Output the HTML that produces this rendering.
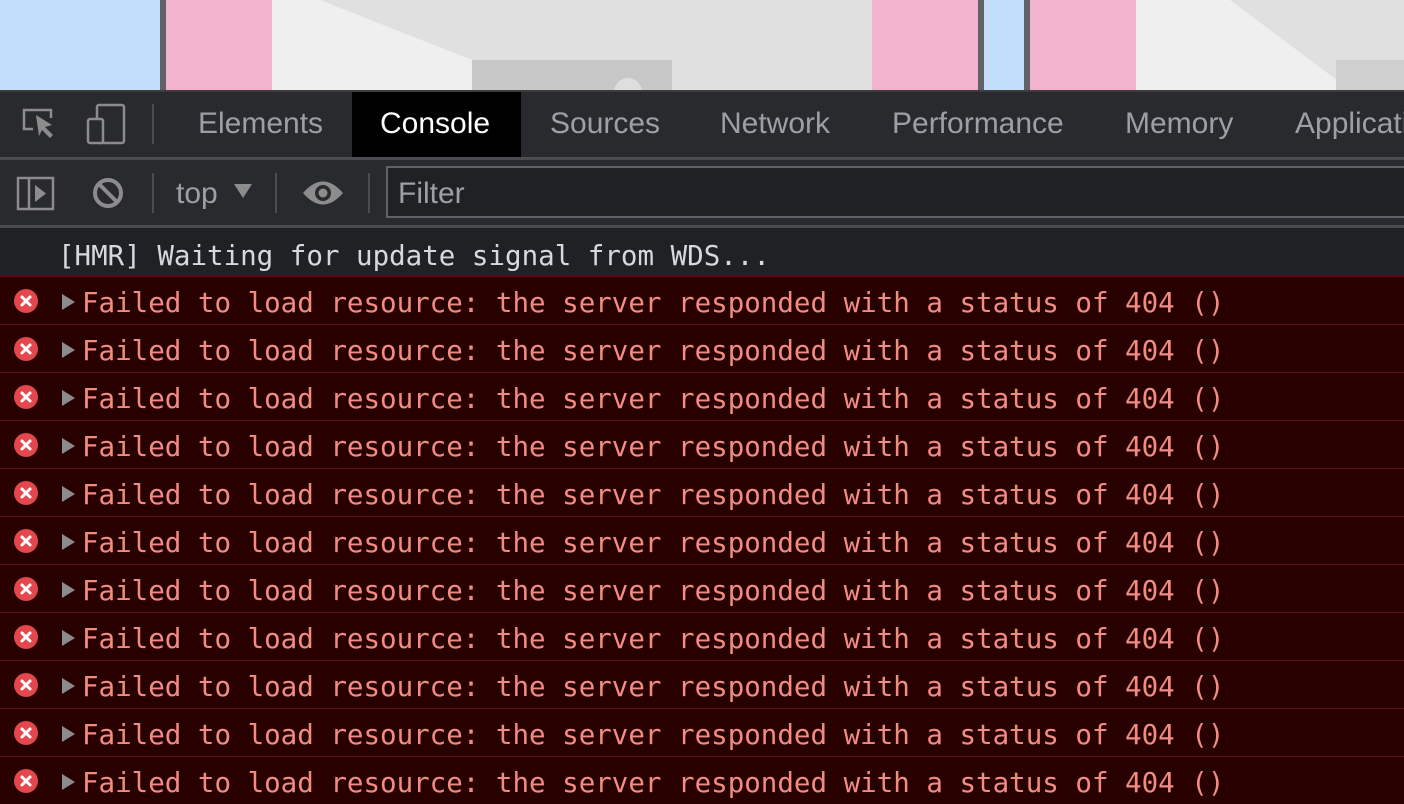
<!DOCTYPE html>
<html><head><meta charset="utf-8"><style>
*{margin:0;padding:0;box-sizing:border-box}
body{width:1404px;height:802px;overflow:hidden;background:#202124;position:relative;font-family:"Liberation Sans",Helvetica,Arial,sans-serif}
.abs{position:absolute}
.tab{position:absolute;top:92px;height:66px;line-height:64px;font-size:30px;color:#9aa0a6;letter-spacing:0}
.row{position:absolute;left:0;width:1404px;height:48px;background:#290000;border-top:1px solid #5c0a0a}
.row .txt{position:absolute;left:82px;top:10px;font-family:"DejaVu Sans Mono","Liberation Mono",monospace;font-size:27.5px;color:#f28b82;white-space:pre;line-height:32px}
.row .ic{position:absolute;left:14px;top:12px;width:24px;height:24px;border-radius:50%;background:#e3474b}
.row .tri{position:absolute;left:62px;top:17px;width:0;height:0;border-left:13px solid #8c8c8c;border-top:8px solid transparent;border-bottom:8px solid transparent}
</style></head><body>
<svg class="abs" style="left:0;top:0" width="1404" height="92">
<rect x="0" y="0" width="1404" height="92" fill="#5f6368"/>
<rect x="0" y="0" width="160" height="90" fill="#c2defb"/>
<rect x="166" y="0" width="106" height="90" fill="#f2b3ce"/>
<rect x="272" y="0" width="600" height="90" fill="#efefef"/>
<polygon points="272,0 872,0 872,90 560,90 300,0" fill="#e0e0e0"/>
<polygon points="272,0 320,0 472,60 472,90 272,90" fill="#efefef"/>
<rect x="472" y="60" width="200" height="30" fill="#c8c8c8"/>
<circle cx="628" cy="92" r="14" fill="#dedede"/>
<rect x="872" y="0" width="106" height="90" fill="#f2b3ce"/>
<rect x="984" y="0" width="40" height="90" fill="#c2defb"/>
<rect x="1030" y="0" width="106" height="90" fill="#f2b3ce"/>
<rect x="1136" y="0" width="268" height="90" fill="#efefef"/>
<polygon points="1136,0 1404,0 1404,90 1350,90 1230,0" fill="#e0e0e0"/>
<polygon points="1336,60 1404,60 1404,90 1336,90" fill="#cfcfcf"/>
</svg>
<div class="abs" style="left:0;top:90px;width:1404px;height:68px;background:#292a2d;border-top:2px solid #3c3c3c"></div>
<div class="abs" style="left:0;top:157px;width:1404px;height:3px;background:#4a4c50"></div>
<div class="abs" style="left:352px;top:92px;width:169px;height:65px;background:#000"></div>
<svg class="abs" style="left:0;top:92px" width="160" height="66">
<path d="M33 37 H24 V18 H51 V26" fill="none" stroke="#8c8c8c" stroke-width="2.5"/>
<path d="M36 23 L52 33 L45 35 L53 43 L50 46 L42 38 L39 44 Z" fill="#8c8c8c"/>
<rect x="97" y="13" width="27" height="38" rx="2" fill="none" stroke="#8c8c8c" stroke-width="2.5"/>
<rect x="88" y="27" width="15" height="24" rx="2" fill="#292a2d" stroke="#8c8c8c" stroke-width="2.5"/>
<rect x="152" y="12" width="2" height="40" fill="#4a4c50"/>
</svg>
<div class="tab" style="left:198px">Elements</div>
<div class="tab" style="left:380px;color:#fff">Console</div>
<div class="tab" style="left:550px">Sources</div>
<div class="tab" style="left:720px">Network</div>
<div class="tab" style="left:892px">Performance</div>
<div class="tab" style="left:1125px">Memory</div>
<div class="tab" style="left:1295px">Application</div>
<div class="abs" style="left:0;top:160px;width:1404px;height:66px;background:#292a2d"></div>
<div class="abs" style="left:0;top:225px;width:1404px;height:3px;background:#4a4c50"></div>
<svg class="abs" style="left:0;top:160px" width="390" height="66">
<rect x="18" y="18" width="35" height="31" fill="none" stroke="#8c8c8c" stroke-width="2.5"/>
<line x1="29" y1="18" x2="29" y2="49" stroke="#8c8c8c" stroke-width="2.5"/>
<path d="M35 25 L46 33.5 L35 42 Z" fill="#8c8c8c"/>
<circle cx="108" cy="33" r="13" fill="none" stroke="#8c8c8c" stroke-width="4"/>
<line x1="99" y1="24" x2="117" y2="42" stroke="#8c8c8c" stroke-width="4"/>
<rect x="152" y="13" width="2" height="40" fill="#4a4c50"/>
<path d="M234 24 L252 24 L243 38 Z" fill="#8c8c8c"/>
<rect x="275" y="13" width="2" height="40" fill="#4a4c50"/>
<path d="M303 33 Q323 10 343 33 Q323 56 303 33 Z" fill="#8c8c8c"/>
<circle cx="323" cy="33" r="8" fill="#292a2d"/>
<circle cx="323" cy="33" r="4.5" fill="#8c8c8c"/>
<rect x="368" y="13" width="2" height="40" fill="#4a4c50"/>
</svg>
<div class="abs" style="left:176px;top:174px;font-size:30px;color:#9aa0a6;line-height:40px">top</div>
<div class="abs" style="left:386px;top:166px;width:1030px;height:52px;border:2px solid #5f6368;background:#202124"></div>
<div class="abs" style="left:398px;top:174px;font-size:30px;color:#9aa0a6;line-height:40px">Filter</div>
<div class="abs" style="left:58px;top:238px;font-family:'DejaVu Sans Mono','Liberation Mono',monospace;font-size:27.5px;color:#d5d9df;white-space:pre;line-height:36px">[HMR] Waiting for update signal from WDS...</div>
<div id="rows"></div>
<script>
var h='';for(var i=0;i<11;i++){h+='<div class="row" style="top:'+(276+48*i)+'px"><div class="ic"><svg width="24" height="24"><path d="M8 8 L16 16 M16 8 L8 16" stroke="#fff" stroke-width="3" stroke-linecap="round"/></svg></div><div class="tri"></div><div class="txt">Failed to load resource: the server responded with a status of 404 ()</div></div>';}
document.getElementById('rows').innerHTML=h;
</script>
</body></html>
